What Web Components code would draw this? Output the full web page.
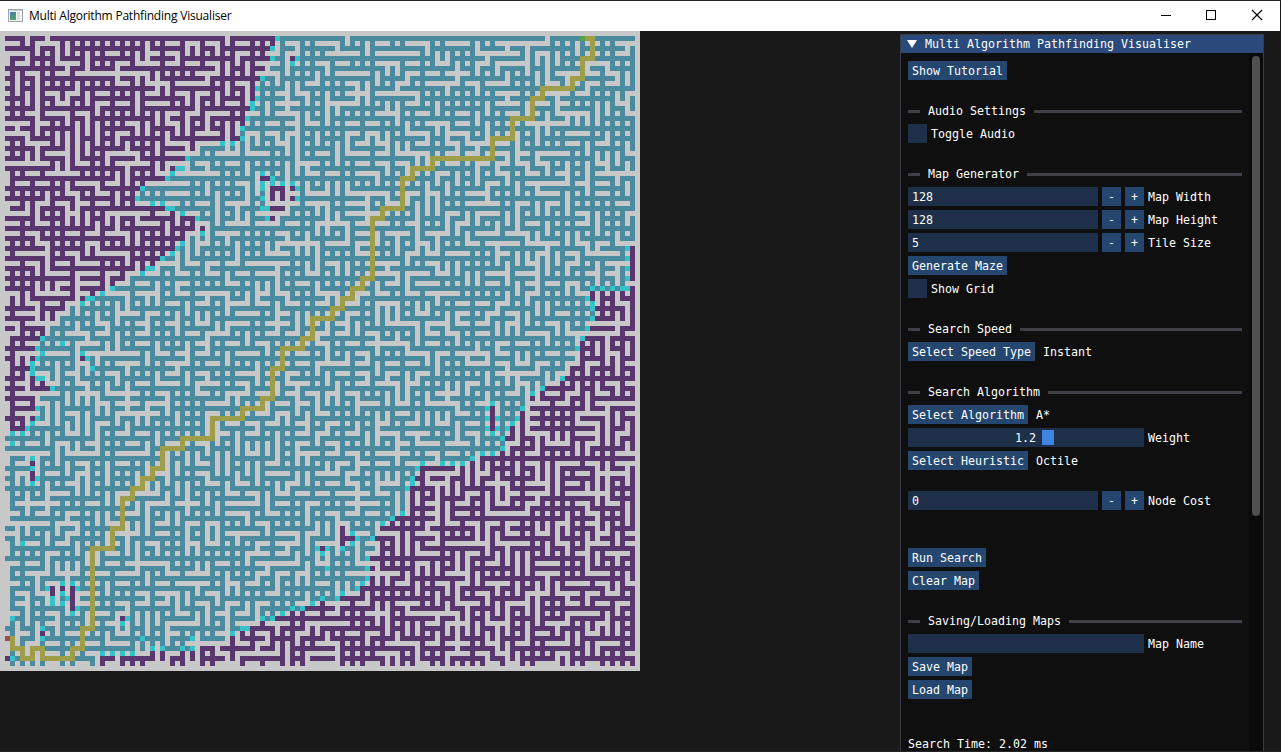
<!DOCTYPE html>
<html lang="en">
<head>
<meta charset="utf-8">
<title>Multi Algorithm Pathfinding Visualiser</title>
<style>
html,body{margin:0;height:100%;overflow:hidden;background:#191919}
</style>
</head>
<body>
<app-window></app-window>
<script>
const define = (name, html, setup) => {
  const t = document.createElement('template');
  t.innerHTML = html;
  customElements.define(name, class extends HTMLElement {
    constructor() {
      super();
      this.attachShadow({mode: 'open'}).appendChild(t.content.cloneNode(true));
    }
    connectedCallback() { if (setup) setup(this, this.shadowRoot); }
  });
};

define('title-bar', `
<style>
:host{display:flex;align-items:center;height:30px;background:#fff;color:#000;font:12px "Open Sans","Noto Sans",sans-serif;box-sizing:border-box;padding-left:8px;margin-right:1px}
.icon{width:15px;height:13px;margin-right:6px;margin-top:-2px;flex:none}
.name{flex:1;white-space:nowrap;letter-spacing:-.21px;margin-top:-1px}
.controls{width:137px;display:flex;flex:none}
.controls svg{width:45px;height:30px;fill:none;stroke:#000;flex:none}
</style>
<svg class="icon" viewBox="0 0 15 13"><defs><linearGradient id="g" x2=".4" y2="1"><stop stop-color="#4779b5"/><stop offset="1" stop-color="#50a06c"/></linearGradient></defs>
<rect x=".5" y=".5" width="14" height="12" fill="#f5f5f5" stroke="#9aa3aa"/><path d="M1 1.5h13" stroke="#cbd0d5"/><rect x="2" y="3" width="6" height="8" fill="url(#g)"/><rect x="9" y="3" width="3" height="8" fill="#dedede"/></svg>
<span class="name"><slot></slot></span>
<span class="controls">
<svg viewBox="0 0 45 30"><path d="M18 14.500h10"/></svg>
<svg viewBox="0 0 45 30"><rect x="18.500" y="9.500" width="9" height="9"/></svg>
<svg viewBox="0 0 45 30"><path d="M19 9l10 10M29 9l-10 10" stroke-width="1.200"/></svg>
</span>`);

define('maze-map', `
<style>
:host{display:block;width:640px;height:640px;background:#c8c8c8}
svg{display:block;width:640px;height:640px}
</style>
<svg viewBox="0 0 128 128" shape-rendering="crispEdges"></svg>`, (host, root) => {
  const N = 128;
  const open = Array.from({length: N}, (_, r) => Array.from({length: N}, (_, c) =>
    r > 0 && c > 0 && r < 127 && c < 127 && !(c % 2 === 1 && r % 2 === 0)));
  let seed = 4711;
  const rnd = () => {
    seed = (seed + 0x6D2B79F5) | 0;
    let t = Math.imul(seed ^ (seed >>> 15), 1 | seed);
    t = (t + Math.imul(t ^ (t >>> 7), 61 | t)) ^ t;
    return ((t ^ (t >>> 14)) >>> 0) / 4294967296;
  };
  // close about a third of the links between neighbouring nodes
  for (let r = 1; r < 127; r++) for (let c = 1; c < 127; c++) {
    if (r % 2 === c % 2 && rnd() < (r === 1 ? 0.12 : 0.33)) open[r][c] = false;
  }
  // reopen one link for every node that got sealed in
  for (let r = 1; r < 127; r += 2) for (let c = 2; c < 127; c += 2) {
    if (!open[r - 1][c] && !open[r + 1][c] && !open[r][c - 1] && !open[r][c + 1]) open[r][c - 1] = true;
  }
  // route corners as [column,row], from the goal to the start
  const route = [[116,1],[118,1],[118,5],[116,5],[116,9],[114,9],[114,11],[108,11],[108,13],[106,13],[106,17],[102,17],[102,21],[98,21],[98,25],[86,25],[86,27],[82,27],[82,29],[80,29],[80,35],[76,35],[76,37],[74,37],[74,49],[72,49],[72,51],[70,51],[70,53],[68,53],[68,55],[66,55],[66,57],[62,57],[62,61],[60,61],[60,63],[56,63],[56,67],[54,67],[54,73],[52,73],[52,75],[48,75],[48,77],[42,77],[42,81],[36,81],[36,83],[32,83],[32,87],[30,87],[30,89],[28,89],[28,91],[26,91],[26,93],[24,93],[24,99],[22,99],[22,103],[18,103],[18,119],[16,119],[16,123],[14,123],[14,125],[8,125],[8,123],[6,123],[6,125],[4,125],[4,123],[2,123],[2,121],[1,121]];
  const onRoute = new Set();
  for (let i = 1; i < route.length; i++) {
    let [c, r] = route[i - 1];
    const [tc, tr] = route[i];
    onRoute.add(r * N + c);
    while (c !== tc || r !== tr) {
      c += Math.sign(tc - c); r += Math.sign(tr - r);
      onRoute.add(r * N + c); open[r][c] = true;
    }
  }
  for (const [c, r] of [[5,123],[5,124],[3,124],[7,124],[3,121],[7,125],[5,125],[3,123]])
    if (!(c === 5 && r === 125) && !(c === 3 && r === 123)) open[r][c] = onRoute.has(r * N + c);
  // unexplored areas, in map pixels
  const areas = [
    [[0,0],[275,0],[272,20],[265,35],[258,55],[250,75],[243,92],[236,112],[200,112],[180,130],[165,147],[136,160],[136,170],[165,178],[196,186],[206,200],[186,207],[168,222],[140,242],[110,256],[72,274],[50,290],[40,310],[30,335],[32,345],[56,362],[36,370],[36,385],[25,400],[0,400]],
    [[640,212],[631,212],[628,258],[590,258],[584,264],[597,275],[590,295],[578,318],[570,345],[556,352],[537,360],[530,370],[522,382],[515,392],[506,408],[503,420],[480,428],[455,438],[432,429],[420,434],[414,450],[408,480],[392,490],[376,500],[370,545],[366,555],[335,570],[315,573],[290,583],[255,595],[235,605],[215,615],[160,622],[95,624],[92,640],[640,640]],
    [[270,153],[296,153],[296,174],[283,175],[283,181],[276,190],[270,190]],
    [[50,556],[76,556],[76,580],[70,580],[70,561],[56,561],[56,565],[50,565]],
    [[490,374],[496,374],[496,400],[490,400]],
    [[340,495],[347,495],[347,505],[356,505],[356,511],[347,511],[347,516],[340,516]],
    [[30,428],[35,428],[35,434],[30,434]],[[30,439],[35,439],[35,450],[30,450]],
    [[260,146],[272,146],[272,150],[260,150]],[[290,25],[296,25],[296,31],[290,31]],
    [[80,325],[86,325],[86,331],[80,331]],[[120,585],[125,585],[125,590],[120,590]],
    [[40,600],[45,600],[45,605],[40,605]],[[5,475],[10,475],[10,480],[5,480]],
    [[320,515],[325,515],[325,521],[320,521]],[[5,625],[10,625],[10,630],[5,630]]
  ];
  const inside = (x, y, p) => {
    let hit = false;
    for (let i = 0, j = p.length - 1; i < p.length; j = i++)
      if ((p[i][1] > y) !== (p[j][1] > y) &&
          x < (p[j][0] - p[i][0]) * (y - p[i][1]) / (p[j][1] - p[i][1]) + p[i][0]) hit = !hit;
    return hit;
  };
  const fresh = (c, r) => open[r][c] && areas.some(p => inside(c * 5 + 2.5, r * 5 + 2.5, p));
  // frontier tiles that lie inside the explored area
  const extra = new Set([[52,29],[53,30],[52,31],[53,32],[52,33],[53,34],[52,35],[53,36],[10,64],[8,64],[12,62],[16,60],[16,64],[16,66],[18,67],[102,89],[100,83],[97,94],[84,89],[4,102],[2,80],[2,82],[2,84],[6,88],[6,90],[10,113],[10,114],[12,114],[13,115],[2,117],[8,119],[8,121],[23,117],[28,121],[45,123],[38,121],[106,74],[104,77],[97,85],[88,93],[65,107],[36,27]].map(([c, r]) => r * N + c));
  const d = {p: '', t: '', f: '', y: ''};
  for (let r = 1; r < 127; r++) for (let c = 1; c < 127; c++) {
    if (!open[r][c]) continue;
    let k = 't';
    if (onRoute.has(r * N + c)) k = 'y';
    else if (fresh(c, r)) k = 'p';
    else if (extra.has(r * N + c) || fresh(c + 1, r) || fresh(c - 1, r) || fresh(c, r + 1) || fresh(c, r - 1)) k = 'f';
    d[k] += `M${c} ${r}h1v1h-1z`;
  }
  root.querySelector('svg').innerHTML =
    `<path fill="#5a366e" d="${d.p}"/><path fill="#4b8b9f" d="${d.t}"/><path fill="#35c3ca" d="${d.f}"/><path fill="#9e9e4a" d="${d.y}"/>` +
    `<rect x="116" y="1" width="1" height="1" fill="#55a04b"/><rect x="1" y="121" width="1" height="1" fill="#a04b4b"/>`;
});

define('ui-button', `<style>:host{display:block;height:19px;line-height:21px;padding:0 4px;background:#24466f;white-space:nowrap;flex:none}
:host([square]){width:19px;padding:0;text-align:center}</style><slot></slot>`);

define('ui-row', `<style>:host{display:flex;height:19px;line-height:21px;gap:4px;white-space:nowrap}
:host([wide]){gap:8px}</style><slot></slot>`);

define('ui-gap', `<style>:host{display:block;height:13px}</style>`);

define('ui-check', `<style>:host{display:flex;height:19px;line-height:21px;gap:4px}i{width:19px;height:19px;background:#1e2f49}</style><i></i><span><slot></slot></span>`);

define('ui-separator', `<style>:host{display:flex;height:19px;line-height:21px;gap:8px;white-space:nowrap}
i{height:3px;background:#404048;width:12px;margin-top:9px}i:last-child{flex:1}</style><i></i><span><slot></slot></span><i></i>`);

define('ui-field', `<style>:host{display:block;width:236px;height:19px;line-height:21px;background:#1e2f49;padding:0 4px;box-sizing:border-box;flex:none}
:host([stepper]){width:190px}</style><slot></slot>`);

define('ui-number', `<style>:host{display:block}</style>
<ui-row><ui-field stepper></ui-field><ui-button square>-</ui-button><ui-button square>+</ui-button><span><slot></slot></span></ui-row>`,
(host, root) => { root.querySelector('ui-field').textContent = host.getAttribute('value'); });

define('ui-slider', `<style>:host{display:block;position:relative;width:236px;height:19px;line-height:21px;background:#1e2f49;text-align:center;flex:none;box-sizing:border-box;padding-right:1px}
i{position:absolute;left:134px;top:2px;width:12px;height:15px;background:#3d85e0}</style><i></i><slot></slot>`);

define('ui-panel', `
<style>
:host{display:flex;flex-direction:column;width:364px;height:717px;box-sizing:border-box;border:1px solid #3b3b44;border-bottom:0;background:#0f0f0f;color:#fff;font:11.63px "DejaVu Sans Mono","Liberation Mono",monospace;overflow:hidden}
header{height:18px;line-height:18px;background:#294a7a;display:flex;align-items:center;flex:none;padding-left:6px;white-space:nowrap}
header svg{width:10px;height:8px;margin-right:8px;margin-top:-1px}
.main{display:flex;flex:1;min-height:0}
.body{display:flex;flex-direction:column;gap:4px;padding:8px 7px 0;width:334px;box-sizing:content-box;overflow:hidden}
.track{width:14px;background:#0a0a0a;padding:3px 3px 0;box-sizing:border-box;flex:none}
.thumb{width:8px;height:460px;border-radius:4px;background:#4f4f4f}
</style>
<header><svg viewBox="0 0 10 8"><path d="M0 0h10L5 8z" fill="#fff"/></svg><slot name="title"></slot></header>
<div class="main"><div class="body"><slot></slot></div><div class="track"><div class="thumb"></div></div></div>`);

define('app-window', `
<style>
:host{display:block;box-sizing:border-box;width:1281px;height:752px;background:#191919;border-top:1px solid #2b272c;border-bottom:1px solid #242424;overflow:hidden}
.client{display:flex;justify-content:space-between;align-items:flex-start;padding-right:17px}
ui-panel{margin-top:3px}
.time{height:13px;line-height:14px}
</style>
<title-bar>Multi Algorithm Pathfinding Visualiser</title-bar>
<div class="client">
<maze-map></maze-map>
<ui-panel>
<span slot="title">Multi Algorithm Pathfinding Visualiser</span>
<ui-row><ui-button>Show Tutorial</ui-button></ui-row>
<ui-gap></ui-gap>
<ui-separator>Audio Settings</ui-separator>
<ui-check>Toggle Audio</ui-check>
<ui-gap></ui-gap>
<ui-separator>Map Generator</ui-separator>
<ui-number value="128">Map Width</ui-number>
<ui-number value="128">Map Height</ui-number>
<ui-number value="5">Tile Size</ui-number>
<ui-row><ui-button>Generate Maze</ui-button></ui-row>
<ui-check>Show Grid</ui-check>
<ui-gap></ui-gap>
<ui-separator>Search Speed</ui-separator>
<ui-row wide><ui-button>Select Speed Type</ui-button><span>Instant</span></ui-row>
<ui-gap></ui-gap>
<ui-separator>Search Algorithm</ui-separator>
<ui-row wide><ui-button>Select Algorithm</ui-button><span>A*</span></ui-row>
<ui-row><ui-slider>1.2</ui-slider><span>Weight</span></ui-row>
<ui-row wide><ui-button>Select Heuristic</ui-button><span>Octile</span></ui-row>
<ui-gap></ui-gap>
<ui-number value="0">Node Cost</ui-number>
<ui-gap></ui-gap>
<ui-gap></ui-gap>
<ui-row><ui-button>Run Search</ui-button></ui-row>
<ui-row><ui-button>Clear Map</ui-button></ui-row>
<ui-gap></ui-gap>
<ui-separator>Saving/Loading Maps</ui-separator>
<ui-row><ui-field></ui-field><span>Map Name</span></ui-row>
<ui-row><ui-button>Save Map</ui-button></ui-row>
<ui-row><ui-button>Load Map</ui-button></ui-row>
<ui-gap></ui-gap>
<ui-gap></ui-gap>
<div class="time">Search Time: 2.02 ms</div>
</ui-panel>
</div>`);
</script>
</body>
</html>
